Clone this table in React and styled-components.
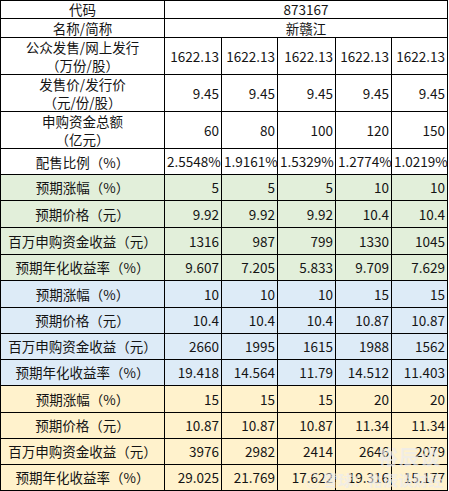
import React from "react";
import styled, { createGlobalStyle } from "styled-components";

const GlobalStyle = createGlobalStyle`
  html, body {
    margin: 0;
    padding: 0;
    background: #fff;
  }
  body {
    font-family: "Noto Sans CJK SC", "Noto Sans", sans-serif;
  }
`;

const COLORS = {
  white: "#ffffff",
  green: "#e2efda",
  blue: "#ddebf7",
  yellow: "#fff2cc",
};

const headRows = [
  { label: ["公众发售/网上发行", "（万份/股）"], h: 36, values: ["1622.13", "1622.13", "1622.13", "1622.13", "1622.13"] },
  { label: ["发售价/发行价", "（元/份/股）"], h: 37, values: ["9.45", "9.45", "9.45", "9.45", "9.45"] },
  { label: ["申购资金总额", "（亿元）"], h: 37, values: ["60", "80", "100", "120", "150"] },
  { label: ["配售比例（%）"], h: 26, values: ["2.5548%", "1.9161%", "1.5329%", "1.2774%", "1.0219%"] },
];

const labels = ["预期涨幅（%）", "预期价格（元）", "百万申购资金收益（元）", "预期年化收益率（%）"];

const groups = [
  {
    color: "green",
    rows: [
      ["5", "5", "5", "10", "10"],
      ["9.92", "9.92", "9.92", "10.4", "10.4"],
      ["1316", "987", "799", "1330", "1045"],
      ["9.607", "7.205", "5.833", "9.709", "7.629"],
    ],
  },
  {
    color: "blue",
    rows: [
      ["10", "10", "10", "15", "15"],
      ["10.4", "10.4", "10.4", "10.87", "10.87"],
      ["2660", "1995", "1615", "1988", "1562"],
      ["19.418", "14.564", "11.79", "14.512", "11.403"],
    ],
  },
  {
    color: "yellow",
    rows: [
      ["15", "15", "15", "20", "20"],
      ["10.87", "10.87", "10.87", "11.34", "11.34"],
      ["3976", "2982", "2414", "2646", "2079"],
      ["29.025", "21.769", "17.622", "19.316", "15.177"],
    ],
  },
];

const rowHeights = [26, 27, 27, 26, 27, 26, 26, 26, 27, 26, 26, 26];

const App = () => {
  let idx = 0;
  return (
    <Page>
      <GlobalStyle />
      <Sheet>
        <colgroup>
          <col style={{ width: 164 }} />
          <col style={{ width: 57 }} />
          <col style={{ width: 56 }} />
          <col style={{ width: 58 }} />
          <col style={{ width: 56 }} />
          <col style={{ width: 56 }} />
        </colgroup>
        <tbody>
          <Row $h={18}>
            <Label>代码</Label>
            <Merged colSpan={5}>873167</Merged>
          </Row>
          <Row $h={19}>
            <Label>名称/简称</Label>
            <Merged colSpan={5}>新赣江</Merged>
          </Row>
          {headRows.map((r, i) => (
            <Row key={"h" + i} $h={r.h}>
              <Label>
                {r.label.map((l, j) => (
                  <Line key={j}>{l}</Line>
                ))}
              </Label>
              {r.values.map((v, j) => (
                <Value key={j}>{v}</Value>
              ))}
            </Row>
          ))}
          {groups.map((g) =>
            g.rows.map((vals, i) => {
              const h = rowHeights[idx++];
              return (
                <Row key={g.color + i} $h={h} $bg={COLORS[g.color]}>
                  <Label>{labels[i]}</Label>
                  {vals.map((v, j) => (
                    <Value key={j}>{v}</Value>
                  ))}
                </Row>
              );
            })
          )}
        </tbody>
      </Sheet>
      <Watermark>
        <MarkTop>裕辰谈</MarkTop>
        <MarkBottom>
          <Logo>◎</Logo>雪球：裕辰谈财经
        </MarkBottom>
      </Watermark>
    </Page>
  );
};

export default App;

const Page = styled.div`
  position: relative;
  width: 449px;
  height: 491px;
  overflow: hidden;
`;

const Sheet = styled.table`
  border-collapse: collapse;
  table-layout: fixed;
  width: 448px;
  font-size: 13.5px;
  color: #141414;
`;

const Row = styled.tr`
  height: ${(p) => p.$h}px;
  background: ${(p) => p.$bg || "#fff"};

  td {
    border: 1px solid #000;
    padding: 0 2px;
    line-height: 17px;
    white-space: nowrap;
    overflow: hidden;
  }
`;

const Label = styled.td`
  text-align: center;
`;

const Line = styled.div`
  line-height: 18px;
`;

const Value = styled.td`
  text-align: right;
`;

const Merged = styled.td`
  text-align: center;
`;

const Watermark = styled.div`
  position: absolute;
  right: 6px;
  bottom: 0;
  display: flex;
  flex-direction: column;
  align-items: flex-end;
  color: rgba(235, 235, 240, 0.7);
  pointer-events: none;
`;

const MarkTop = styled.div`
  font-size: 20px;
  font-weight: 700;
  line-height: 24px;
  margin-right: 2px;
  letter-spacing: 1px;
`;

const MarkBottom = styled.div`
  font-size: 15px;
  font-weight: 700;
  line-height: 22px;
  display: flex;
  align-items: center;
`;

const Logo = styled.span`
  font-size: 16px;
  margin-right: 2px;
`;
